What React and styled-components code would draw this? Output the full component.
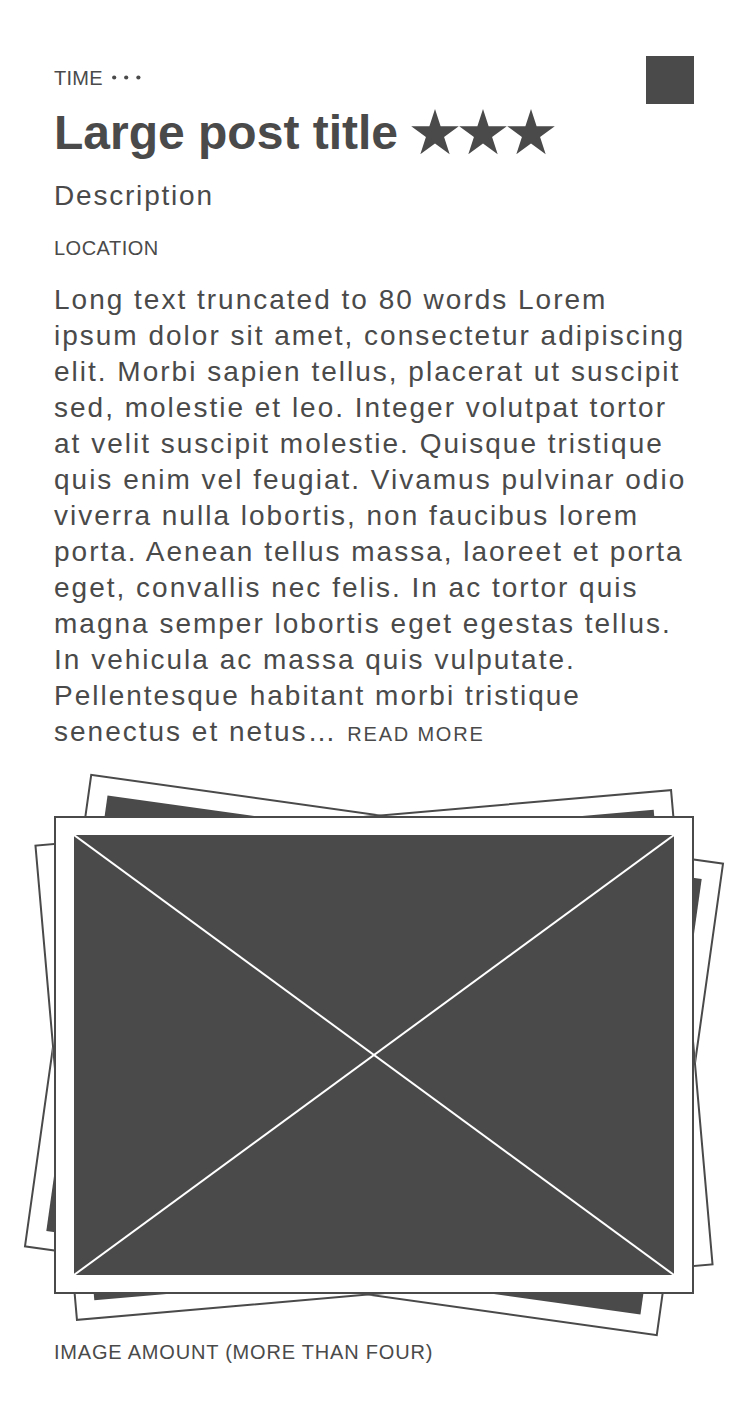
import React from 'react';
import styled, { createGlobalStyle } from 'styled-components';

const GlobalStyle = createGlobalStyle`
  html, body {
    margin: 0;
    padding: 0;
    background: #ffffff;
  }
  body {
    font-family: "Liberation Sans", Arial, Helvetica, sans-serif;
    color: #4a4a4a;
  }
  * {
    box-sizing: border-box;
  }
`

const Post = styled.article`
  display: flex;
  flex-direction: column;
  padding: 56px 56px 60px 54px;
`

const TopRow = styled.div`
  display: flex;
  justify-content: space-between;
  align-items: flex-start;
  height: 48px;
`

const Meta = styled.div`
  margin-top: 10px;
  font-size: 20px;
  line-height: 24px;
  letter-spacing: 0.3px;
  text-transform: uppercase;
`

const MoreDots = styled.svg`
  margin-left: 9px;
  vertical-align: 5px;
`

const Thumb = styled.div`
  width: 48px;
  height: 48px;
  background: #4a4a4a;
`

const Title = styled.h1`
  margin: 1px 0 0;
  font-size: 48px;
  font-weight: bold;
  line-height: 56px;
  white-space: nowrap;
`

const Stars = styled.span`
  display: inline-block;
  vertical-align: -6px;
  line-height: 0;
`

const Star = styled.svg`
  display: inline-block;
`

const Description = styled.div`
  margin-top: 17px;
  font-size: 28px;
  line-height: 36px;
  letter-spacing: 1.8px;
`

const Small = styled.div`
  margin-top: ${props => props.$gap || 0}px;
  font-size: 20px;
  line-height: 24px;
  letter-spacing: 0.5px;
  text-transform: uppercase;
`

const Body = styled.p`
  margin: 22px 0 0;
  font-size: 28px;
  line-height: 36px;
  letter-spacing: 2px;
`

const ReadMore = styled.a`
  font-size: 20px;
  line-height: 24px;
  letter-spacing: 1.8px;
  text-transform: uppercase;
  color: inherit;
  text-decoration: none;
`

const Stack = styled.div`
  position: relative;
  width: 640px;
  height: 478px;
  margin-top: 66px;
`

const Frame = styled.div`
  width: 640px;
  height: 478px;
  padding: 17px 18px;
  border: 2px solid #4a4a4a;
  background: #ffffff;
`

const BackFrame = styled(Frame)`
  position: absolute;
  left: 0;
  top: 0;
  transform: rotate(${props => props.$angle}deg);
`

const FrontFrame = styled(Frame)`
  position: relative;
`

const Picture = styled.div`
  width: 100%;
  height: 100%;
  background: #4a4a4a;
  line-height: 0;
`

const Caption = styled(Small)`
  letter-spacing: 0.8px;
`

const starPath = 'M24 0L29.61 17.27L47.78 17.27L33.08 27.95L38.69 45.23L24 34.55L9.31 45.23L14.92 27.95L0.22 17.27L18.39 17.27Z';

const body = 'Long text truncated to 80 words Lorem ipsum dolor sit amet, consectetur adipiscing elit. Morbi sapien tellus, placerat ut suscipit sed, molestie et leo. Integer volutpat tortor at velit suscipit molestie. Quisque tristique quis enim vel feugiat. Vivamus pulvinar odio viverra nulla lobortis, non faucibus lorem porta. Aenean tellus massa, laoreet et porta eget, convallis nec felis. In ac tortor quis magna semper lobortis eget egestas tellus. In vehicula ac massa quis vulputate. Pellentesque habitant morbi tristique senectus et netus…';

export default function App() {
  return (
    <>
      <GlobalStyle />
      <Post>
        <TopRow>
          <Meta>
            Time
            <MoreDots width="30" height="5" viewBox="0 0 30 5">
              <circle cx="2.2" cy="2.5" r="2.1" fill="#4a4a4a" />
              <circle cx="14.2" cy="2.5" r="2.1" fill="#4a4a4a" />
              <circle cx="26.4" cy="2.5" r="2.1" fill="#4a4a4a" />
            </MoreDots>
          </Meta>
          <Thumb />
        </TopRow>
        <Title>
          Large post title{' '}
          <Stars>
            {[0, 1, 2].map(i => (
              <Star key={i} width="48" height="46" viewBox="0 0 48 46">
                <path d={starPath} fill="#4a4a4a" />
              </Star>
            ))}
          </Stars>
        </Title>
        <Description>Description</Description>
        <Small $gap={22}>Location</Small>
        <Body>
          {body} <ReadMore href="#">Read more</ReadMore>
        </Body>
        <Stack>
          <BackFrame $angle={8}><Picture /></BackFrame>
          <BackFrame $angle={-5}><Picture /></BackFrame>
          <FrontFrame>
            <Picture>
              <svg width="100%" height="100%" viewBox="0 0 600 440" preserveAspectRatio="none">
                <line x1="0" y1="0" x2="600" y2="440" stroke="#ffffff" strokeWidth="2" />
                <line x1="600" y1="0" x2="0" y2="440" stroke="#ffffff" strokeWidth="2" />
              </svg>
            </Picture>
          </FrontFrame>
        </Stack>
        <Caption $gap={46}>Image amount (more than four)</Caption>
      </Post>
    </>
  );
}
